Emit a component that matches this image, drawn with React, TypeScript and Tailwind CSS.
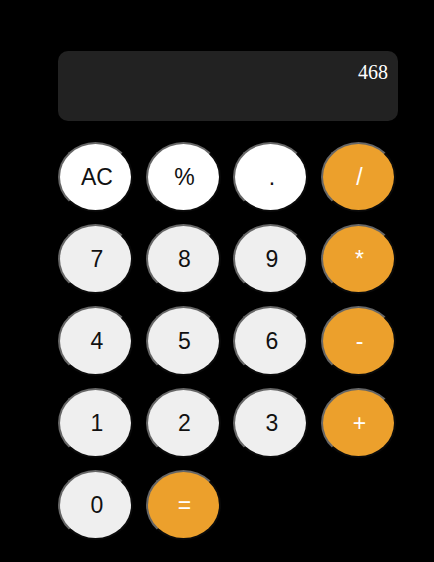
const keys = [
  { label: "AC", kind: "top" },
  { label: "%", kind: "top" },
  { label: ".", kind: "top" },
  { label: "/", kind: "op" },
  { label: "7", kind: "num" },
  { label: "8", kind: "num" },
  { label: "9", kind: "num" },
  { label: "*", kind: "op" },
  { label: "4", kind: "num" },
  { label: "5", kind: "num" },
  { label: "6", kind: "num" },
  { label: "-", kind: "op" },
  { label: "1", kind: "num" },
  { label: "2", kind: "num" },
  { label: "3", kind: "num" },
  { label: "+", kind: "op" },
  { label: "0", kind: "num" },
  { label: "=", kind: "op" },
]

const kindClass: Record<string, string> = {
  top: "bg-white text-[#111]",
  num: "bg-[#efefef] text-[#111]",
  op: "bg-[#eca02c] text-white",
}

export default function App() {
  return (
    <div className="min-h-screen w-full bg-black pl-[58px] pt-[51px]">
      <div className="w-[340px]">
        <div className="h-[70px] rounded-[10px] bg-[#222222] px-[10px] pt-[10px] text-right font-['Liberation_Serif',serif] text-[20px] leading-[23px] text-white">
          468
        </div>

        <div className="mt-[21px] grid grid-cols-[repeat(4,75px)] gap-x-[12.5px] gap-y-3">
          {keys.map((k) => (
            <button
              key={k.label}
              className={`flex h-[70px] w-[75px] items-center justify-center rounded-[50%] border-2 border-t-[#666] border-l-[#666] border-r-[#0a0a0a] border-b-[#0a0a0a] pl-[3px] font-['Liberation_Sans',Arial,sans-serif] text-[23px] ${kindClass[k.kind]}`}
            >
              {k.label}
            </button>
          ))}
        </div>
      </div>
    </div>
  )
}
